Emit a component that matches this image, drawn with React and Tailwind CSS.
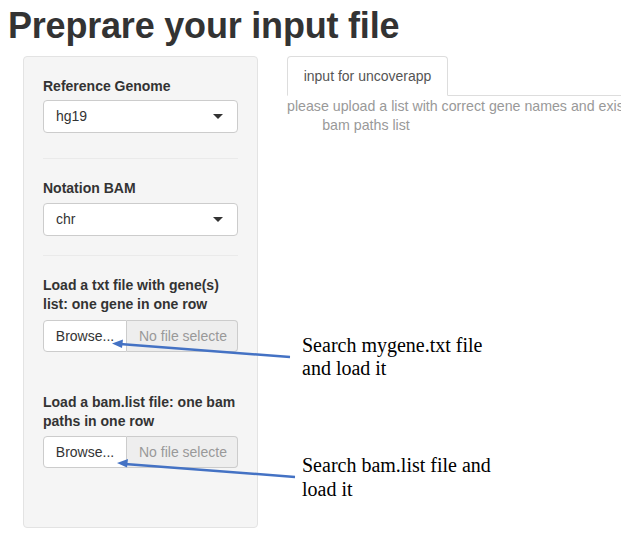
export default function App() {
  const sans = { fontFamily: '"Liberation Sans", Arial, sans-serif' }
  const serif = { fontFamily: '"Liberation Serif", "Times New Roman", serif' }
  return (
    <div className="relative w-[621px] h-[543px] overflow-hidden bg-white text-[#333]" style={sans}>
      <h1 className="pl-[8px] pt-[6px] text-[36px] leading-[40px] font-bold text-[#333] tracking-[-0.2px]">Preprare your input file</h1>

      <div className="flex mt-[10px]">
        <div className="ml-[23px] w-[235px] h-[472px] bg-[#f5f5f5] border border-[#e3e3e3] rounded-[4px] px-[19px] pt-[19px]">
          <label className="block text-[14px] leading-[20px] font-bold mb-[4px]">Reference Genome</label>
          <div className="flex items-center justify-between h-[33px] bg-white border border-[#ccc] rounded-[4px] px-[12px] text-[14px]">
            <span>hg19</span>
            <span className="w-0 h-0 border-l-[5px] border-r-[5px] border-t-[5px] border-l-transparent border-r-transparent border-t-[#333] mr-[2px]"></span>
          </div>
          <div className="h-px bg-[#eaeaea] mt-[25px] mb-[19px]"></div>
          <label className="block text-[14px] leading-[20px] font-bold mb-[5px]">Notation BAM</label>
          <div className="flex items-center justify-between h-[33px] bg-white border border-[#ccc] rounded-[4px] px-[12px] text-[14px]">
            <span>chr</span>
            <span className="w-0 h-0 border-l-[5px] border-r-[5px] border-t-[5px] border-l-transparent border-r-transparent border-t-[#333] mr-[2px]"></span>
          </div>
          <div className="h-px bg-[#eaeaea] mt-[19px] mb-[20px]"></div>
          <label className="block text-[14px] leading-[19px] font-bold mb-[6px]">Load a txt file with gene(s) list: one gene in one row</label>
          <div className="flex h-[32px] text-[14px]">
            <div className="w-[84px] bg-white border border-[#ccc] rounded-l-[4px] flex items-center justify-center">Browse...</div>
            <div className="flex-1 min-w-0 bg-[#eee] border border-l-0 border-[#ccc] rounded-r-[4px] flex items-center pl-[12px] pr-[10px] text-[#999]">
              <span className="block overflow-hidden whitespace-nowrap">No file selected</span>
            </div>
          </div>
          <label className="block text-[14px] leading-[19px] font-bold mt-[41px] mb-[5px]">Load a bam.list file: one bam paths in one row</label>
          <div className="flex h-[32px] text-[14px]">
            <div className="w-[84px] bg-white border border-[#ccc] rounded-l-[4px] flex items-center justify-center">Browse...</div>
            <div className="flex-1 min-w-0 bg-[#eee] border border-l-0 border-[#ccc] rounded-r-[4px] flex items-center pl-[12px] pr-[10px] text-[#999]">
              <span className="block overflow-hidden whitespace-nowrap">No file selected</span>
            </div>
          </div>
        </div>

        <div className="ml-[29px] flex-1 min-w-0">
          <div className="flex border-b border-[#ddd]">
            <div className="w-[161px] h-[40px] -mb-px bg-white border border-[#ddd] border-b-white rounded-t-[4px] flex items-center justify-center text-[14px] text-[#555]">input for uncoverapp</div>
          </div>
          <div className="text-[14.2px] leading-[19px] text-[#999] mt-[1px]">
            <div className="whitespace-nowrap">please upload a list with correct gene names and existing</div>
            <div className="w-[158px] text-center">bam paths list</div>
          </div>
        </div>
      </div>

      <div className="absolute left-[302px] top-[334px] text-[20px] leading-[23px] text-black" style={serif}>
        Search mygene.txt file<br />and load it
      </div>
      <div className="absolute left-[302px] top-[453px] text-[20px] leading-[24px] text-black" style={serif}>
        Search bam.list file and<br />load it
      </div>

      <svg className="absolute left-0 top-0" width="621" height="543">
        <line x1="290" y1="357" x2="120" y2="344" stroke="#4472c4" strokeWidth="2.5" />
        <polygon points="112,343.5 123,339.5 122,348" fill="#4472c4" />
        <line x1="295" y1="477" x2="125" y2="464" stroke="#4472c4" strokeWidth="2.5" />
        <polygon points="117,463 128,459 127,467.5" fill="#4472c4" />
      </svg>
    </div>
  )
}
